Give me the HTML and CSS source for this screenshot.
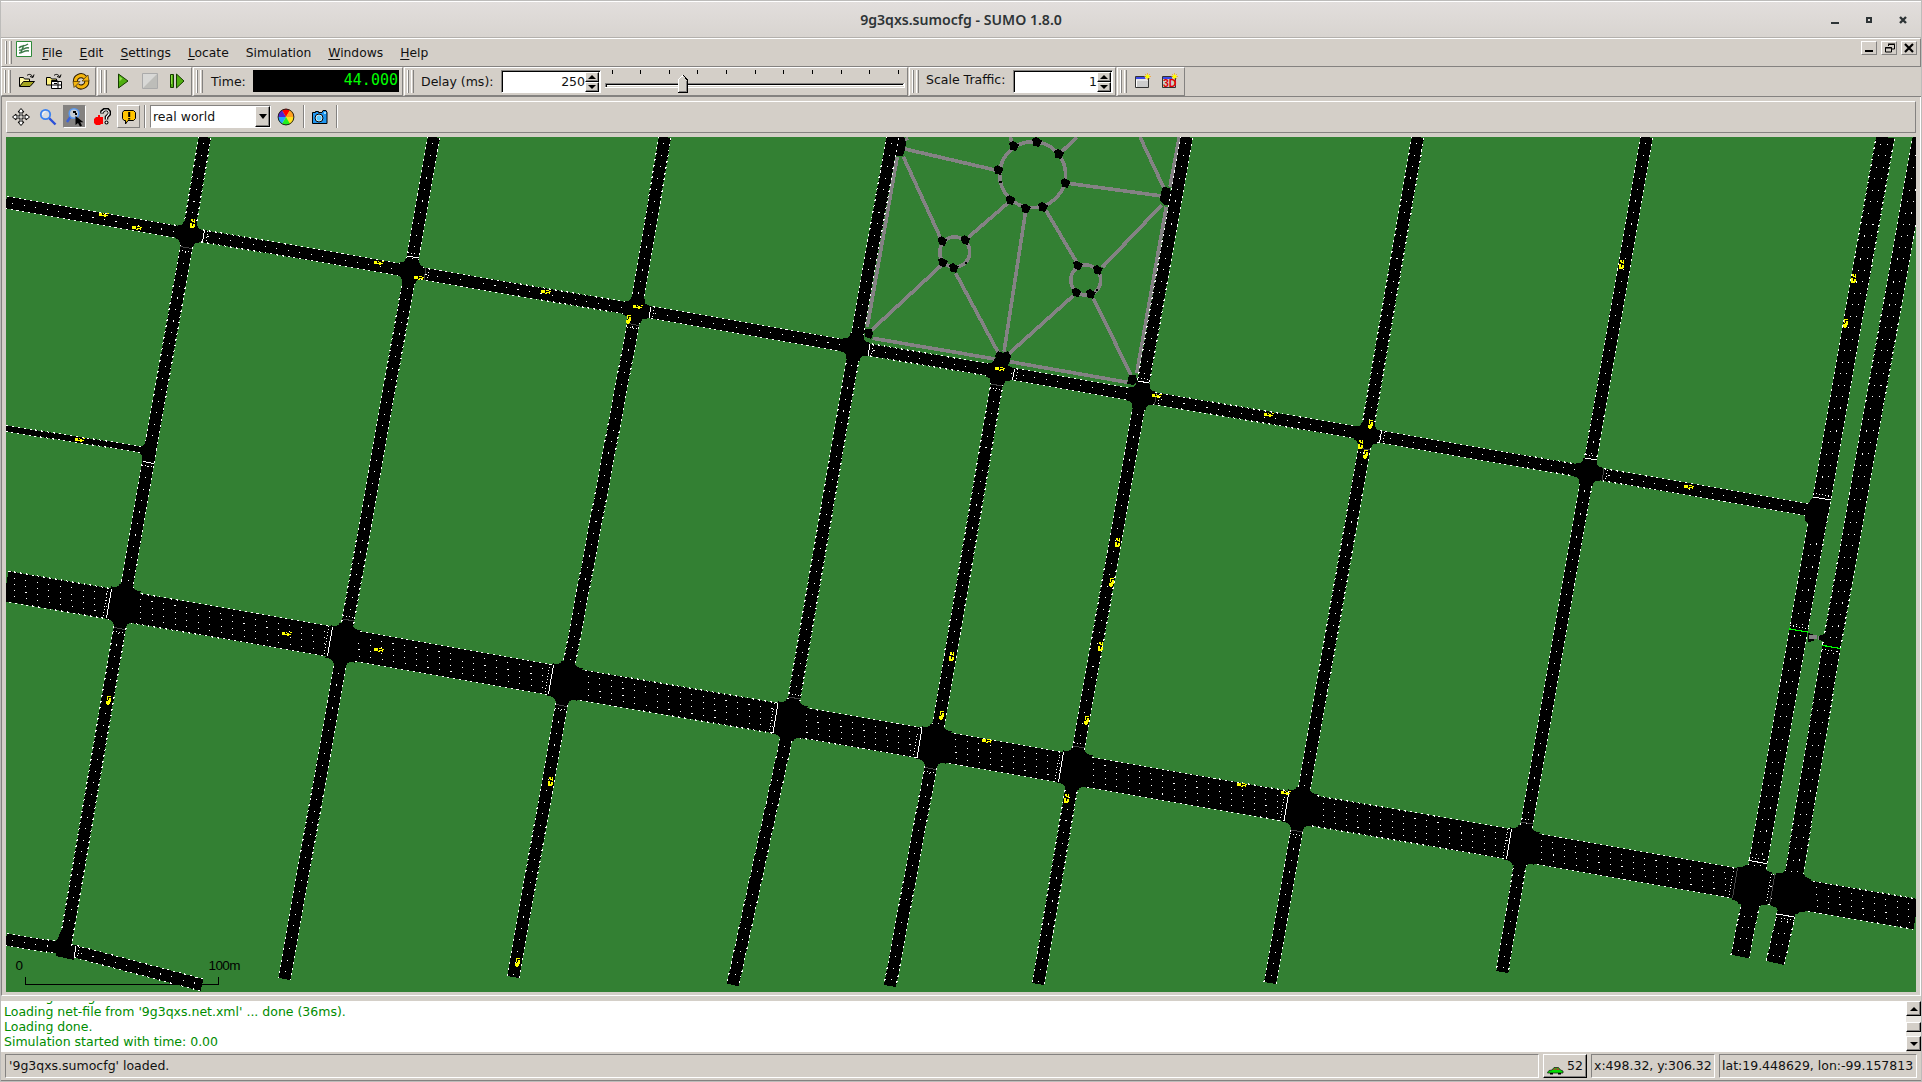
FILE: index.html
```html
<!DOCTYPE html>
<html lang="en">
<head>
<meta charset="utf-8">
<title>9g3qxs.sumocfg - SUMO 1.8.0</title>
<link rel="stylesheet" href="styles.css">
</head>
<body>
<div class="window">
  <header class="titlebar">
    <h1>9g3qxs.sumocfg - SUMO 1.8.0</h1>
    <svg class="winctl" width="80" height="12" viewBox="0 0 80 12">
      <path d="M1 8h8v2H1z"/><path d="M36 3h6v6h-6zM38 5v2h2V5z" fill-rule="evenodd"/><path d="M70 3l6 6M76 3l-6 6" stroke="#2e3436" stroke-width="2.4"/>
    </svg>
  </header>

  <nav class="menubar">
    <i class="grip"></i>
    <svg class="appicon" width="16" height="16" viewBox="0 0 16 16"><path fill="#fff" stroke="#2f8a3a" d="M.5.500h15v15H.5z"/><path fill="none" stroke="#3c7a48" stroke-width="1.500" d="M3 7c2-3 5-1 9-4M3 9c3 1 6-3 10-2M3 12c4 0 5-3 10-2M8 4l-3 7"/></svg>
    <span><u>F</u>ile</span><span><u>E</u>dit</span><span><u>S</u>ettings</span><span><u>L</u>ocate</span><span>Simulation</span><span><u>W</u>indows</span><span><u>H</u>elp</span>
    <div class="mdi">
      <b><svg width="14" height="12"><path d="M3 8h8v2H3z"/></svg></b>
      <b><svg width="14" height="12" fill="none" stroke="#000"><path d="M6.500 4V2.500h6v4.500H10M6 2h7M3.500 5.500h6v4.500h-6zM3 6h7"/></svg></b>
      <b><svg width="14" height="12"><path d="M3 2l8 8M11 2l-8 8" stroke="#000" stroke-width="2.200"/></svg></b>
    </div>
  </nav>

  <div class="toolbar">
    <div class="group g1"><i class="grip"></i>
      <svg class="ic" width="18" height="18" viewBox="0 0 18 18"><path d="M1.500 14V5.500h4l1 1.500h5v2" fill="#fff9a0" stroke="#000"/><path d="M1.500 14.500l4-5h11l-4.500 5z" fill="#a5a520" stroke="#000"/><path d="M9 3.500c2-2 5-1 5.500 1.500M12 4.500l3 1 1-3" fill="none" stroke="#000"/></svg>
      <svg class="ic" width="18" height="18" viewBox="0 0 18 18"><path d="M1.500 13V5.500h4l1 1.500h5v2M1.500 13h5V8.500h6" fill="#fff380" stroke="#000"/><path d="M9 3.500c2-2 5-1 5.500 1.500M12 4.500l3 1 1-3" fill="none" stroke="#000"/><path d="M6.500 9.500h10v7h-10zM6.500 13h10M9 11.500h3M13 9.500v7" fill="#fff" stroke="#000"/></svg>
      <svg class="ic" width="18" height="18" viewBox="0 0 18 18"><path d="M3.500 10A5.500 5.500 0 0 1 13 5.500M14.500 8A5.500 5.500 0 0 1 5 13" fill="none" stroke="#2b1a00" stroke-width="5"/><path d="M3.500 10A5.500 5.500 0 0 1 13 5.500M14.500 8A5.500 5.500 0 0 1 5 13" fill="none" stroke="#f5b50c" stroke-width="3"/><path d="M10 9h7l-1-6zM8 9.500H1l1 6z" fill="#f5b50c" stroke="#4a3000" stroke-width=".7"/></svg>
    </div>
    <div class="group g2"><i class="grip"></i>
      <svg class="ic" width="18" height="18" viewBox="0 0 18 18"><path d="M4.500 2v14l9.500-7z" fill="#4fae10" stroke="#153c00"/><path d="M5.500 4.500v5l3-3z" fill="#8fe04a"/></svg>
      <svg class="ic" width="18" height="18" viewBox="0 0 18 18"><path d="M1.500 1.500h15v15h-15z" fill="#d8d8d6" stroke="#aaa"/><path d="M16 2v14H2z" fill="#bdbdb9"/></svg>
      <svg class="ic" width="18" height="18" viewBox="0 0 18 18"><path d="M2.500 2.500h3v13h-3zM8.500 2v14l7.500-7z" fill="#4fae10" stroke="#153c00"/><path d="M3 3h1v9H3z" fill="#8fe04a"/></svg>
    </div>
    <div class="group g3"><i class="grip"></i><label>Time:</label><output class="lcd">44.000</output></div>
    <div class="group g4"><i class="grip"></i><label>Delay (ms):</label>
      <div class="spin"><span>250</span><em><b class="up"></b><b class="down"></b></em></div>
      <svg class="slider" width="302" height="26" viewBox="604 68 302 26" shape-rendering="crispEdges">
        <path d="M612.500 70v4M640.500 70v4M669.500 70v4M697.500 70v4M726.500 70v4M755.500 70v4M783.500 70v4M812.500 70v4M841.500 70v4M869.500 70v4M898.500 70v4" stroke="#000"/>
        <path d="M605 83h300v5H605z" fill="#fff"/><path d="M605 83h299v1H606v3h-1z" fill="#848280"/><path d="M606 84h297v1H607v2h-1z" fill="#000"/><path d="M607 86h297v1H607z" fill="#d4d0c8"/>
        <path d="M678 80l5-5 5 5v13h-10z" fill="#d4d0c8"/><path d="M678.500 92V79.500l4.500-4" fill="none" stroke="#fff"/><path d="M683 75l4.500 5v12.500H678" fill="none" stroke="#000"/><path d="M686.500 81v10.500H679" fill="none" stroke="#848280"/>
      </svg>
    </div>
    <div class="group g5"><i class="grip"></i><label>Scale Traffic:</label><div class="spin"><span>1</span><em><b class="up"></b><b class="down"></b></em></div></div>
    <div class="group g6"><i class="grip"></i>
      <svg class="ic" width="18" height="18" viewBox="0 0 18 18"><path d="M1.500 4.500h13v11h-13z" fill="#ccc" stroke="#333"/><path d="M2 5h9v2H2z" fill="#3b49e8"/><path d="M2 8h12M2.500 8v7" stroke="#fff"/><path d="M13.500 1v7M10 4.500h7M11 2l5 5M16 2l-5 5" stroke="#ff8a00" stroke-width=".6"/><circle cx="13.500" cy="4.500" r="2" fill="#ff0"/></svg>
      <svg class="ic" width="18" height="18" viewBox="0 0 18 18"><path d="M1.500 4.500h13v11h-13z" fill="#ccc" stroke="#333"/><path d="M2 5h9v2H2z" fill="#3b49e8"/><text x="2" y="15" class="three">3D</text><path d="M13.500 1v7M10 4.500h7M11 2l5 5M16 2l-5 5" stroke="#ff8a00" stroke-width=".6"/><circle cx="13.500" cy="4.500" r="2" fill="#ff0"/></svg>
    </div>
  </div>

  <main class="view">
    <div class="viewbar">
      <span class="tb"><svg width="18" height="18" viewBox="0 0 18 18"><path d="M9 .500l3 3.500h-2v4h4V6l3.500 3-3.500 3v-2h-4v4h2l-3 3.500L6 14h2v-4H4v2L.500 9 4 6v2h4V4H6z" fill="#fff" stroke="#000"/><path d="M8 8h2v2H8z" fill="#d4d0c8"/></svg></span>
      <span class="tb"><svg width="18" height="18" viewBox="0 0 18 18"><path d="M10 10l6.500 6.500" stroke="#2b50d8" stroke-width="2.400"/><circle cx="6.500" cy="6.500" r="4.700" fill="#d8dde2" stroke="#3b82f0" stroke-width="1.800"/><path d="M3.500 7a3.500 3.500 0 0 1 3-3.500" stroke="#fff" fill="none"/></svg></span>
      <span class="tb pressed"><svg width="20" height="20" viewBox="0 0 20 20"><path d="M6 9l-4 6" stroke="#3b62d8" stroke-width="2.400"/><circle cx="9" cy="6.500" r="4.800" fill="#c4ccd4" stroke="#5b9af0" stroke-width="1.600"/><path d="M8 4h3v2h1v2h-2V6H8z" fill="#000"/><path d="M10.500 9v9l2.500-2 2 3.500 2-1-1.800-3.300h3.300z"/></svg></span>
      <span class="tb"><svg width="18" height="18" viewBox="0 0 18 18"><path d="M9 5.500V3.500L11.500 1.500h3L16.500 4v2L13.500 9v2.500" fill="none" stroke="#000" stroke-width="3.600"/><path d="M9 5V4l2.500-2h3L16 4v2l-2.500 3v2.500" fill="none" stroke="#fff" stroke-width="1.200"/><circle cx="13.500" cy="14.500" r="2" /><circle cx="13.500" cy="14.500" r="1" fill="#fff"/><path d="M5 7h2v2h3v7H8l-1 1H3l-2-2v-4l2-2h2z" fill="#f00"/></svg></span>
      <span class="tb raised"><svg width="18" height="18" viewBox="0 0 18 18"><path d="M4 2.500h9.500l2 2v6l-2 2H8L5.500 16v-3.500H4l-1.500-2v-6z" fill="#ffc400" stroke="#000"/><path d="M8.200 4h2v5h-2zM8.200 10h2v1.500h-2z"/></svg></span>
      <i class="sep"></i>
      <div class="combo"><span>real world</span><b class="down"></b></div>
      <svg class="wheel" width="18" height="18" viewBox="-9 -9 18 18"><circle r="8" fill="#ff0"/><path d="M0 0L-4-7A8 8 0 0 1 4-7z" fill="#f00"/><path d="M0 0L4-7A8 8 0 0 1 8 0z" fill="#ffa020"/><path d="M0 0L8 0A8 8 0 0 1 4 7z" fill="#ffe020"/><path d="M0 0L4 7A8 8 0 0 1-4 7z" fill="#20f020"/><path d="M0 0L-4 7A8 8 0 0 1-8 0z" fill="#20a8ff"/><path d="M0 0L-8 0A8 8 0 0 1-4-7z" fill="#5520d0"/><circle r="7.900" fill="none" stroke="#222"/></svg>
      <i class="sep s2"></i>
      <svg class="cam" width="18" height="18" viewBox="0 0 18 18"><path d="M1.500 4.500h3v-1h3v1h3.500l1-2h3l1 2v11h-14.500z" fill="#1f96f0" stroke="#000"/><circle cx="8" cy="10" r="4" fill="#fff" stroke="#000"/><circle cx="8" cy="10" r="2.700" fill="#58c8ff"/><path d="M13 4h2v2h-2z" fill="#9df"/></svg>
      <i class="sep s3"></i>
    </div>
    <svg id="map" class="map" width="1910" height="855" viewBox="6 137 1910 855"></svg>
  </main>

  <section class="log">
    <div class="lines">
      <p>Loading configuration ... done.</p>
      <p>Loading net-file from '9g3qxs.net.xml' ... done (36ms).</p>
      <p>Loading done.</p>
      <p>Simulation started with time: 0.00</p>
    </div>
    <div class="scroll"><b class="up"></b><i></i><b class="down"></b></div>
  </section>

  <footer class="status">
    <div class="msg">'9g3qxs.sumocfg' loaded.</div>
    <div class="cars"><svg width="17" height="9" viewBox="0 0 17 9"><path d="M.5 6.500L2 4.500l3-.5L7 1.500h4.500L13.500 4l2.500 1v2H.500z" fill="#0d0" stroke="#222" stroke-width=".8"/><path d="M6 4l1.500-1.800h1V4zM9.500 2.200h1.700L12.500 4h-3z" fill="#b33"/><path d="M3 7h3v1.500H3zM11 7h3v1.500h-3z"/></svg>52</div>
    <div class="xy">x:498.32, y:306.32</div>
    <div class="geo">lat:19.448629, lon:-99.157813</div>
  </footer>
</div>
<script src="map.js"></script>
</body>
</html>
```
FILE: styles.css
```css
* { box-sizing: border-box; }
body { margin: 0; background: #d4d0c8; font: 12.500px/15px "DejaVu Sans", sans-serif; color: #111; overflow: hidden; }
.window { width: 1922px; height: 1082px; border: 1px solid #bdbcba; display: flex; flex-direction: column; background: #d4cfc8; }
svg { display: block; flex: none; }
b, i, em { font-style: normal; font-weight: normal; display: block; }

.titlebar { height: 37px; border-top: 1px solid #fff; border-bottom: 1px solid #b3b0ac; background: linear-gradient(#e2dedc, #d8d4d0); display: grid; grid-template-columns: 1fr auto 1fr; align-items: center; }
.titlebar h1 { grid-column: 2; margin: 0 0 3px; font: 600 14.100px/20px "Noto Sans", sans-serif; color: #2e3436; white-space: nowrap; padding-top: 3px; }
.winctl { grid-column: 3; justify-self: end; margin: 0 11px 0 0; fill: #2e3436; }

.grip { width: 7px; height: 23px; flex: none; border: solid; border-width: 0 1px; border-color: transparent #848280 transparent #fff; background: linear-gradient(90deg, transparent 0 0, #848280 0 1px, transparent 1px 3px, #fff 3px 4px, transparent 4px); }

.menubar { height: 29px; border-top: 1px solid #fff; border-left: 1px solid #fff; border-bottom: 1px solid #848280; border-right: 1px solid #848280; display: flex; align-items: flex-start; padding: 2px 3px; gap: 17px; }
.menubar .appicon { margin-left: -13px; margin-right: -7px; }
.menubar span { margin-top: 5px; font-size: 12.300px; }
.menubar u { text-decoration: underline; text-underline-offset: 2px; text-decoration-thickness: 1px; }
.mdi { margin-left: auto; display: flex; gap: 4px; }
.mdi b { width: 16px; height: 14px; border: 1px solid; border-color: #fff #848280 #848280 #fff; }

.toolbar { height: 30px; display: flex; gap: 1px; padding-left: 0; border-bottom: 1px solid #848280; }
.group { height: 29px; border: 1px solid; border-color: #fff #848280 #848280 #fff; display: flex; align-items: center; padding: 0 0 1px 2px; }
.g1 { width: 95px; } .g2 { width: 95px; } .g3 { width: 210px; } .g4 { width: 504px; } .g5 { width: 207px; } .g6 { width: 68px; }
.g1 .ic { margin-left: 9px; } .g1 .grip + .ic { margin-left: 7px; }
.g2 .ic { margin-left: 9px; } .g2 .grip + .ic { margin-left: 7px; }
.g6 .ic { margin-left: 9px; } .g6 .grip + .ic { margin-left: 7px; }
.group label { margin-left: 8px; white-space: nowrap; }
.g3 label { width: 42px; }
.g4 label { width: 80px; margin-left: 7px; }
.g5 label { width: 87px; margin-left: 7px; padding-bottom: 3px; }
.lcd { width: 146px; height: 22px; background: #000; color: #0f0; font: 15px/20px "DejaVu Sans Mono", monospace; text-align: right; padding-right: 1px; }
.spin { width: 100px; height: 23px; background: #fff; border: 1px solid; border-color: #848280 #fff #fff #848280; box-shadow: inset 1px 1px #000; display: flex; justify-content: flex-end; line-height: 20px; padding-top: 1px; }
.spin em { width: 14px; margin-right: 1px; }
.spin em b { height: 10px; }
.up, .down { background: #d4cfc8; border: 1px solid; border-color: #fff #000 #000 #fff; box-shadow: inset -1px -1px #848280; display: flex; align-items: center; justify-content: center; }
.up::before, .down::before { content: ""; border: 4px solid transparent; border-top-width: 0; border-bottom: 4px solid #000; }
.down::before { border-bottom-width: 0; border-top: 4px solid #000; }
.slider { margin-left: 3px; }
.three { font: bold 10.500px "Liberation Sans", sans-serif; fill: #e00000; }

.view { height: 899px; border-left: 1px solid #848280; border-right: 1px solid #fff; border-bottom: 1px solid #fff; padding: 4px 4px 0; }
.viewbar { height: 32px; border: 1px solid; border-color: #fff #848280 #848280 #fff; display: flex; align-items: center; margin-bottom: 4px; padding: 0 0 1px 2px; }
.tb { width: 23px; height: 23px; margin-right: 4px; display: flex; align-items: center; justify-content: center; border: 1px solid transparent; }
.pressed { background: #848280; border-color: #848280 #fff #fff #848280; }
.raised { border-color: #fff #848280 #848280 #fff; }
.sep { width: 2px; height: 23px; border-left: 1px solid #848280; border-right: 1px solid #fff; }
.combo { width: 121px; height: 23px; margin-left: 4px; background: #fff; border: 1px solid; border-color: #848280 #fff #fff #848280; display: flex; line-height: 22px; }
.combo span { flex: 1; padding-left: 2px; font-size: 12.500px; }
.combo .down { width: 15px; }
.combo .down::before { border-width: 5px 4px 0; }
.wheel { margin-left: 6px; }
.s2 { margin-left: 8px; }
.cam { margin-left: 6px; }
.s3 { margin-left: 7px; }

.map { background: #338033; shape-rendering: crispEdges; }
.asphalt { stroke: #000; fill: none; }
.edge { stroke: #fff; fill: none; stroke-width: 1.100; stroke-dasharray: 2 3.850; }
.lane { stroke: #fff; fill: none; stroke-width: 1; stroke-dasharray: 1.100 10.550; }
.near { stroke: #fff; stroke-width: 1; stroke-dasharray: 1 2; }
.stop { stroke: #fff; } .dim { stroke: #444; } .green { stroke: #0f0; stroke-width: 1.200; }
.path { stroke: #848284; stroke-width: 3.600; fill: none; }
.car { fill: #ff0; }
.scale { font: 13.500px "Liberation Sans", sans-serif; fill: #000; }

.log { height: 56px; padding-top: 5px; display: flex; }
.lines { flex: 1; background: #fff; height: 51px; overflow: hidden; color: #008c00; display: flex; flex-direction: column; justify-content: flex-end; padding: 0 0 3px 3px; }
.lines p { margin: 0; flex: none; height: 15px; }
.scroll { width: 15px; height: 50px; display: flex; flex-direction: column; justify-content: space-between; background: #e9e6e1; }
.scroll b { height: 15px; }
.scroll i { height: 10px; margin-top: 2px; background: #d4cfc8; border: 1px solid; border-color: #fff #000 #000 #fff; box-shadow: inset -1px -1px #848280; }

.status { flex: 1; border-bottom: 1px solid #848280; padding: 2px 4px 2px 4px; display: flex; gap: 4px; line-height: 22px; white-space: nowrap; }
.status div { height: 24px; border: 1px solid; border-color: #848280 #fff #fff #848280; padding-left: 2px; }
.status .msg { flex: 1; padding-left: 3px; }
.status .cars { width: 44px; border-color: #fff #000 #000 #fff; box-shadow: inset -1px -1px #848280; display: flex; gap: 3px; padding-left: 3px; }
.cars svg { margin-top: 11px; }
.status .xy { width: 124px; }
.status .geo { width: 198px; }
```
FILE: map.js
```js
// Street network, in window pixels. Each road: [lanes, x1, y1, x2, y2]
const LANE = 6.1;
const roads = [
  [2,6,202.5,1810,510], [1,6,428.6,150,450.8], [2,6,939.7,64,948.500], [2,64,948.500,202,985],
  [2,205,137,188.500,234],[2,188.500,234,150.700,448],[2,150.700,448,124,604],[2,124,604,65,946],
  [2,434,137,410.500,270],[2,410.500,270,344,644],[2,344,644,284.300,979],
  [2,665,137,636,309],[2,636,309,566,681],[2,566,681,513.200,977],
  [2,892.500,137,855,347],[2,855,347,791,717],[2,791,717,732.800,985],
  [2,999,372,935,744],[2,935,744,890,986],
  [2,1186.700,137,1141,396],[2,1141,396,1075,768],[2,1075,768,1038,984],
  [2,1418,137,1366.500,435],[2,1366.500,435,1301,808],[2,1301,808,1270,983],
  [2,1646.700,137,1588,473],[2,1588,473,1523,846],[2,1523,846,1502.300,972],
  [3,1885.300,137,1819,514],[3,1819,514,1754,886],[3,1754,886,1740,956.500],
  [3,1922,137,1831.700,646],[3,1831.700,646,1791,892],[3,1791,892,1775.300,963],
  [5,6,586,1916,914.200]
];
// Junctions: [x, y, half-width across the main road, half-width across the side road, flare]
const junctions = [
  [188.500,234,6,6,5],[410.500,271,6,6,5],[636,310,6,6,5],[855,347,6,6,6],[999,372,6,6,5],[1141,396,6,6,6],
  [1366.500,435,6,6,5],[1588,472,6,6,6],
  [123,605,15.500,6,7],[343,644,15.500,6,7],[565,682,15.500,6,7],[790,720,15.500,6,7],[934,745,15.500,6,7],
  [1075,769,15.500,6,7],[1300,808,15.500,6,7],[1522,846,15.500,6,7],[1752,886,16,9.500,6],[1791,892.500,16,9.500,6]
];
// Stop lines: [x, y, length, 'h' lies across a main road | 'v' across a side road, class, side of the lane marks]
const stops = [
  [109,603.500,30,'h','stop',-1],[330,641.500,30,'h','stop',-1],[551,679.500,30,'h','stop',-1],[775.500,718,30,'h','stop',-1],
  [919.500,743,30,'h','stop',-1],[1061,767,30,'h','stop',-1],[1286.500,806,30,'h','stop',-1],[1509,844,30,'h','stop',-1],
  [1735,883,30,'h','dim',-1],[1772.300,889,30,'h','dim',-1],
  [203.500,236,12,'h','stop',1],[425,274,12,'h','dim',1],[650,312.500,12,'h','stop',1],[869,350,12,'h','stop',1],
  [1013.500,374.500,12,'h','stop',1],[1155.500,399,12,'h','dim',1],[1380.500,437,12,'h','stop',1],[1603,475,12,'h','dim',1],[75,952,12,'h','stop',1],
  [186,247.500,12,'v','dim',1],[413,257,12,'v','stop',-1],[148.500,462.500,12,'v','stop',1],[119.500,628.500,12,'v','dim',1],
  [348.500,620,12,'v','dim',-1],[633.500,324.500,12,'v','dim',1],[996.500,385,12,'v','dim',1],[1143.500,382,12,'v','stop',-1],
  [561.500,705.500,12,'v','dim',1],[794.500,698,12,'v','dim',-1],[930.500,768.500,12,'v','dim',1],[1079,747,12,'v','dim',-1],
  [1364,449,12,'v','dim',1],[1591,459,12,'v','stop',-1],[1297,831,12,'v','dim',1],[1527,823,12,'v','dim',-1],
  [1822,498.500,19,'v','stop',-1],[1757.500,862,19,'v','stop',-1],[1785.500,915.500,19,'v','stop',1],
  [1798.700,630.500,19,'v','green',-1],[1831.700,647,19,'v','green',1]
];
// Footpaths in the park
const paths = [
  [897.300,156.700,867.300,326.700],[905,149,995,170],[903.300,156.700,940.700,238.300],[968.300,237.300,1008.300,202.700],
  [1025.700,211,1004,351.700],[1045.700,210,1076.700,262.300],[1102.300,267.300,1161.700,205],[1068.300,183.300,1161.700,196],
  [1061.700,151.700,1077,137],[1012.500,143,1010,137],[1140,137,1164,188.300],[1179.300,137,1170,186.700],
  [1166.300,206.700,1136.700,373.300],[941.700,265,871.700,330],[955.700,273.300,998.300,352.700],[1073.300,295.700,1009.300,353.300],
  [1093.300,298.300,1131,375],[872.700,338.300,995,359],[1010,361.700,1127.300,382.300],[902,142,908,138]
];
const rings = [[1032.700,174.700,33],[954.700,252,15],[1085.700,280,15]];
const knots = [
  [1014,146,0],[1037,142,0],[1059,154,0],[1065.500,183,0],[1043,207,0],[1026,208.500,0],[1010.500,200,0],[998.500,170,0],
  [942.500,241,1],[965.500,240,1],[943,262.500,1],[954,268,1],[1078,265.500,1],[1098,270,1],[1076.500,292.500,1],[1091,294,1]
];
const carsH = [[104,215.400],[136.700,228],[379,262.500],[419,277.500],[286.700,634],[379.300,649.600],[80,440.400],[545.700,291.600],[637.600,306.600],[999.700,369],[1156.500,395.800],[986.700,741],[1268.500,415.400],[1241.500,784.500],[1285.500,792.500],[1688.500,487]];
const carsV = [[193.300,223.600],[628.500,319.500],[1118.300,542.700],[1111.600,583],[1100.600,647],[1086.700,721],[951.800,656.600],[941.800,716],[550.500,781.600],[518,963.400],[1067,798.600],[1371,425],[1360.500,444.500],[1365.500,455.400],[1853.700,279.300],[1846,324],[1621.600,264.500],[109,701]];

let out = '';
const line = (c, x1, y1, x2, y2, extra = '') => out += `<path class="${c}" d="M${x1} ${y1}L${x2} ${y2}" ${extra}/>`;

for (const [x1, y1, x2, y2] of paths) line('path', x1, y1, x2, y2);
for (const [x, y, r] of rings) out += `<circle class="path" cx="${x}" cy="${y}" r="${r}"/>`;
for (const [x, y, k] of knots) {
  const r = k ? 4.8 : 5;
  out += `<path d="M${x - r} ${y - r * .6}L${x - 1} ${y - r}L${x + r} ${y - r * .3}L${x + 2} ${y + r}L${x - r * .7} ${y + r * .7}z"/>`;
}
out += '<path d="M891 137h13l2 5-1 8-2 6h-13zM1161 192l2-5 7 1 1 6-1 11h-6l-4-5zM864 329l8 0 1 5-2 5-6-2zM995 356l3-5 5 2 5-2 3 5-2 8h-10zM1129 375l7 0 1 6-3 4-7-1z"/>';
out += '<path d="M999 181h3v2h-3zM965 262h2v2h-2zM1096 289h2v2h-2z"/>';

roads.forEach(([n, x1, y1, x2, y2]) => line('asphalt', x1, y1, x2, y2, `stroke-width="${n * LANE}"`));
roads.forEach(([n, x1, y1, x2, y2]) => {
  const len = Math.hypot(x2 - x1, y2 - y1), nx = -(y2 - y1) / len, ny = (x2 - x1) / len;
  for (let i = 0; i <= n; i++) {
    const o = (i - n / 2) * LANE;
    line(i === 0 || i === n ? 'edge' : 'lane', x1 + nx * o, y1 + ny * o, x2 + nx * o, y2 + ny * o,
      `stroke-dashoffset="${i === 0 || i === n ? 0 : -5 - i * 1.2}"`);
  }
});

for (const [x, y, h, v, f] of junctions) {
  const wide = h > 10, a = v + f + (wide ? 2 : 1), b = h + f + (wide ? -2 : 1), H = h + .8, V = v + .8;
  out += `<path transform="translate(${x} ${y}) rotate(9.7)" d="M${-a} ${-H}Q${-V} ${-H} ${-V} ${-b}H${V}Q${V} ${-H} ${a} ${-H}V${H}Q${V} ${H} ${V} ${b}H${-V}Q${-V} ${H} ${-a} ${H}z"/>`;
}
out += '<path d="M995 358h9l1 13h-12zM142 446l3-3 2-7h10l-5 26h-10l0-6-2-2zM54 942l4-3 2-7h11l0 14 6 4-3 10-18-4zM1806 504l3-1 3-5h19l-7 37h-16v-11l-3-3z"/>';
out += '<path d="M1808 633l6 2v6l-6 1zM1819 636l11-4v11l-11-3z"/><path fill="#848284" d="M1809 635h8v4h-8zM1818 636h1v4h-1z"/>';

for (const [x, y, len, dir, cls, side] of stops) {
  const t = (dir === 'h' ? 99.7 : 9.7) * Math.PI / 180, dx = Math.cos(t) * len / 2, dy = Math.sin(t) * len / 2;
  line(cls, x - dx, y - dy, x + dx, y + dy);
  const ox = dir === 'h' ? side * 3.5 : -side * .6, oy = dir === 'h' ? side * .6 : side * 3.5;
  line('near', x - dx + ox, y - dy + oy, x + dx + ox, y + dy + oy);
}

carsH.forEach(([x, y], i) => out += `<path class="car" transform="translate(${Math.round(x) - 5} ${Math.round(y) - 2})" d="${
  i % 2 ? 'M0 0h4v3h-4zM5 0h3v1h-3zM5 2h4v1h-4zM8 1h2v1h-2zM4 3h2v1h-2zM8 3h1v1h-1z'
        : 'M0 0h3v3h-3zM3 2h2v1h-2zM4 0h1v1h-1zM5 1h2v3h-2zM8 0h2v1h-2zM7 2h2v1h-2z'}"/>`);
carsV.forEach(([x, y], i) => out += `<path class="car" transform="translate(${Math.round(x) - 3} ${Math.round(y) - 5})" d="${
  i % 2 ? 'M1 0h4v1h-4zM1 1h1v3h-1zM3 2h2v4h-2zM0 5h4v3h-4zM1 8h2v1h-2zM2 4h1v1h-1z'
        : 'M1 0h2v2h-2zM4 0h1v4h-1zM2 2h2v1h-2zM0 4h2v3h-2zM3 5h2v3h-2zM0 7h4v2h-4z'}"/>`);

out += '<text class="scale" x="15.500" y="970">0</text><text class="scale" x="208.500" y="970" textLength="32">100m</text>';
out += '<path d="M25.500 977V984.500H218.500V977" fill="none" stroke="#000"/>';
document.getElementById('map').innerHTML = out;
```
